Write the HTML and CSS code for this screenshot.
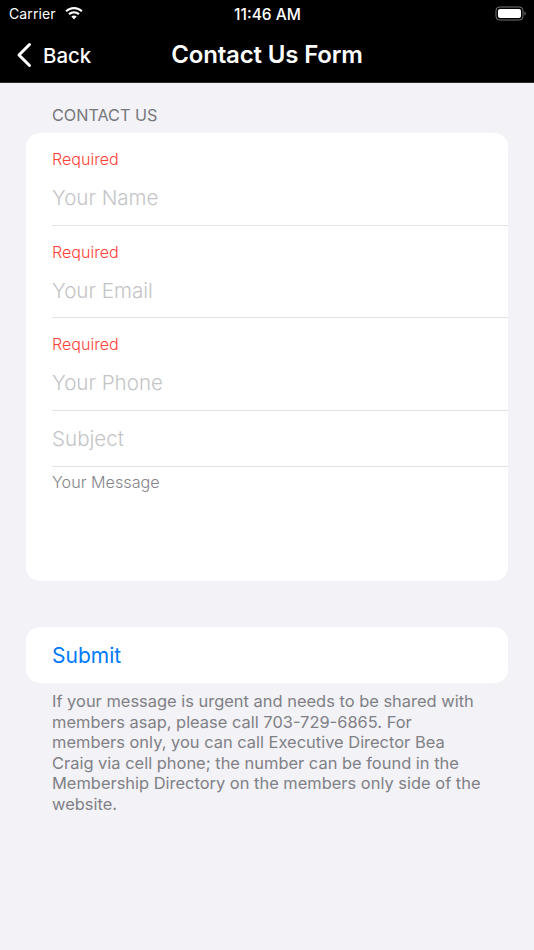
FILE: index.html
```html
<!DOCTYPE html>
<html lang="en">
<head>
<meta charset="utf-8">
<title>Contact Us Form</title>
<link rel="stylesheet" href="styles.css">
</head>
<body>
<header class="topbar">
  <div class="status">
    <div class="status-left">
      <span class="carrier">Carrier</span>
      <svg class="wifi" width="20" height="15" viewBox="0 0 18 13"><path d="M9 2.600c2.500 0 4.800 1 6.500 2.600l1.200-1.300C14.700 1.900 12 .7 9 .7S3.300 1.900 1.300 3.900l1.200 1.300C4.200 3.600 6.500 2.600 9 2.600z" fill="#fff"/><path d="M9 6.400c1.500 0 2.800.6 3.800 1.500l1.300-1.300C12.700 5.300 11 4.500 9 4.500S5.300 5.300 3.900 6.600l1.300 1.300c1-.9 2.300-1.500 3.800-1.500z" fill="#fff"/><path d="M9 8.300c-1 0-1.800.4-2.400 1L9 11.800l2.400-2.500c-.6-.6-1.400-1-2.400-1z" fill="#fff"/></svg>
    </div>
    <span class="time">11:46 AM</span>
    <svg class="battery" width="32" height="15" viewBox="0 0 32 15"><rect x="1" y="1" width="27" height="13" rx="3.500" fill="none" stroke="#777" stroke-width="1"/><rect x="3" y="3" width="23" height="9" rx="2" fill="#fff"/><path d="M29.500 5.500c.8.300 1.200 1 1.200 2s-.4 1.700-1.200 2z" fill="#777"/></svg>
  </div>
  <nav class="nav">
    <a class="back">
      <svg class="chevron" width="16" height="26" viewBox="0 0 16 26"><path d="M13.500 2.500 3 13l10.500 10.500" fill="none" stroke="#fff" stroke-width="3" stroke-linecap="round" stroke-linejoin="round"/></svg>
      <span>Back</span>
    </a>
    <h1 class="title">Contact Us Form</h1>
  </nav>
</header>
<main class="content">
  <h2 class="section-label">CONTACT US</h2>
  <section class="card">
    <div class="field">
      <div class="required">Required</div>
      <div class="placeholder">Your Name</div>
    </div>
    <div class="field">
      <div class="required">Required</div>
      <div class="placeholder">Your Email</div>
    </div>
    <div class="field">
      <div class="required">Required</div>
      <div class="placeholder">Your Phone</div>
    </div>
    <div class="field field-plain">
      <div class="placeholder">Subject</div>
    </div>
    <div class="message">Your Message</div>
  </section>
  <section class="card submit-card">
    <a class="submit">Submit</a>
  </section>
  <p class="note">If your message is urgent and needs to be shared with members asap, please call 703-729-6865. For members only, you can call Executive Director Bea Craig via cell phone; the number can be found in the Membership Directory on the members only side of the website.</p>
</main>
</body>
</html>
```

FILE: styles.css
```css
* { box-sizing: border-box; }
html, body { margin: 0; padding: 0; }
body {
  width: 534px;
  height: 950px;
  overflow: hidden;
  background: #f2f2f7;
  font-family: Inter, "Liberation Sans", sans-serif;
}
.topbar {
  background: #000;
  color: #fff;
  height: 83px;
  border-bottom: 1px solid #2a2a2a;
}
.status {
  height: 27px;
  padding: 0 7px 0 9px;
  display: grid;
  grid-template-columns: 1fr auto 1fr;
  align-items: center;
}
.status-left { display: flex; align-items: center; gap: 7px; }
.carrier { font-size: 14px; letter-spacing: 0.1px; }
.wifi { margin: 0 0 0 1px; }
.time { font-size: 15.500px; font-weight: 500; margin: 1px 0 0 -1px; }
.battery { justify-self: end; }
.nav {
  height: 55px;
  position: relative;
  display: flex;
  align-items: center;
  justify-content: center;
}
.back {
  position: absolute;
  left: 16px;
  top: 14px;
  display: flex;
  align-items: center;
  gap: 11px;
  font-size: 20.400px;
  font-weight: 500;
}
.back span { margin-top: 2px; }
.title { margin: -1px 0 0; font-size: 24px; font-weight: 600; letter-spacing: -0.160px; }
.content { padding: 0 26px; }
.section-label {
  margin: 0;
  padding: 22px 0 7px 26px;
  height: 50px;
  font-size: 16.200px;
  line-height: 21px;
  font-weight: 400;
  color: #77777c;
}
.card {
  background: #fff;
  border-radius: 14px;
  padding-left: 26px;
}
.field {
  height: 92.500px;
  padding-top: 16px;
  border-bottom: 1px solid #e3e3e6;
}
.field-plain { height: 56.500px; padding-top: 2px; display: flex; align-items: center; }
.required { font-size: 16.100px; line-height: 21px; font-weight: 350; color: #ff4138; }
.placeholder { font-size: 20.600px; line-height: 30px; margin-top: 13px; font-weight: 350; color: #c4c4c6; }
.field-plain .placeholder { margin-top: 0; }
.message {
  height: 114px;
  padding-top: 5px;
  font-size: 16.200px;
  line-height: 21px;
  font-weight: 350;
  color: #85858a;
}
.submit-card {
  margin-top: 46px;
  height: 56px;
  display: flex;
  align-items: center;
}
.submit { font-size: 21px; color: #007aff; }
.note {
  margin: 8px 0 0;
  padding: 0 23px 0 26px;
  font-size: 16.450px;
  line-height: 20.600px;
  color: #808085;
}
```
